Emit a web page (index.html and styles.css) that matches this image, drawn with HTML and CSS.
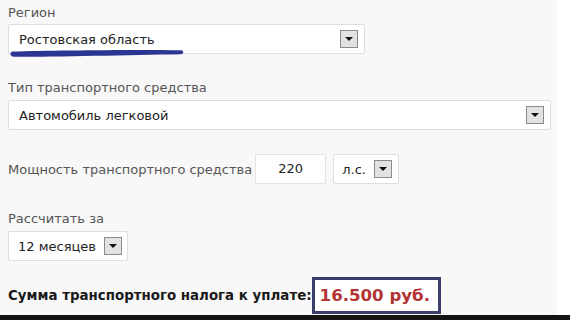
FILE: index.html
```html
<!DOCTYPE html>
<html lang="ru">
<head>
<meta charset="utf-8">
<link rel="stylesheet" href="styles.css">
</head>
<body>
<div class="frame">
  <div class="main">
    <div class="field field-region">
      <div class="label">Регион</div>
      <div class="select select-region">
        <span class="value">Ростовская область</span>
        <span class="arrow"></span>
        <svg class="underline" width="176" height="12" viewBox="0 0 176 12"><path d="M4 5.5 C 40 4.5, 120 3.5, 172 4.2 C 175 4.5, 175 8, 172 8.2 C 120 9, 50 10.8, 5 10.8 C 1 10.8, 0 5.7, 4 5.5 Z" fill="#2b3592"/></svg>
      </div>
    </div>
    <div class="field field-type">
      <div class="label">Тип транспортного средства</div>
      <div class="select select-type">
        <span class="value">Автомобиль легковой</span>
        <span class="arrow"></span>
      </div>
    </div>
    <div class="row-power">
      <span class="label-inline">Мощность транспортного средства</span>
      <div class="input-power">220</div>
      <div class="select select-unit">
        <span class="value">л.с.</span>
        <span class="arrow"></span>
      </div>
    </div>
    <div class="field field-period">
      <div class="label">Рассчитать за</div>
      <div class="select select-period">
        <span class="value">12 месяцев</span>
        <span class="arrow"></span>
      </div>
    </div>
    <div class="sum-row">
      <span class="sum-label">Сумма транспортного налога к уплате:</span>
      <span class="sum-box">16.500 руб.</span>
    </div>
  </div>
  <div class="side"></div>
</div>
<div class="bottom-bar"></div>
</body>
</html>
```
FILE: styles.css
```css
html, body {
  margin: 0;
  padding: 0;
}
body {
  width: 570px;
  height: 320px;
  overflow: hidden;
  background: #fff;
  font-family: "DejaVu Sans", Verdana, sans-serif;
  font-size: 13px;
  color: #4a4a4a;
}
.frame {
  display: flex;
  height: 315px;
  overflow: hidden;
}
.main {
  width: 549px;
  background: #f8f8f8;
  padding: 5px 0 0 8px;
}
.side {
  flex: 1;
  background: #fff;
}
.bottom-bar {
  height: 5px;
  background: #141414;
}
.label {
  height: 16px;
  line-height: 16px;
  color: #555;
}
.select {
  position: relative;
  display: flex;
  align-items: center;
  justify-content: space-between;
  box-sizing: border-box;
  height: 30px;
  background: #fff;
  border: 1px solid #dedede;
  border-radius: 2px;
  padding: 0 6px 0 10px;
  color: #222;
}
.arrow {
  position: relative;
  width: 18px;
  height: 18px;
  box-sizing: border-box;
  border: 1px solid #8a8a8a;
  background: #e2e2e2;
}
.arrow::after {
  content: "";
  position: absolute;
  left: 4px;
  top: 6px;
  border-left: 4px solid transparent;
  border-right: 4px solid transparent;
  border-top: 4px solid #111;
}
.field-region .label {
  margin-bottom: 3px;
}
.select-region {
  width: 357px;
}
.underline {
  position: absolute;
  left: 0;
  top: 21px;
}
.field-type {
  margin-top: 26px;
}
.field-type .label {
  margin-bottom: 4px;
}
.select-type {
  width: 543px;
}
.row-power {
  display: flex;
  align-items: center;
  margin-top: 24px;
  height: 30px;
}
.label-inline {
  color: #555;
  margin-right: 3px;
}
.input-power {
  box-sizing: border-box;
  width: 71px;
  height: 30px;
  line-height: 28px;
  background: #fff;
  border: 1px solid #e4e4e4;
  text-align: center;
  color: #222;
  margin-right: 7px;
}
.select-unit {
  width: 66px;
  padding: 0 6px 0 8px;
}
.field-period {
  margin-top: 27px;
}
.field-period .label {
  margin-bottom: 4px;
}
.select-period {
  width: 120px;
  padding: 0 5px 0 9px;
}
.sum-row {
  display: flex;
  align-items: center;
  margin-top: 16px;
}
.sum-label {
  font-weight: bold;
  color: #1a1a1a;
  font-size: 13.4px;
  margin-right: 0;
}
.sum-box {
  box-sizing: border-box;
  height: 37px;
  line-height: 31px;
  padding: 0 8px 0 5px;
  border: 3px solid #3d3d6b;
  background: #fff;
  color: #b23434;
  font-weight: bold;
  font-size: 16.6px;
}
```
